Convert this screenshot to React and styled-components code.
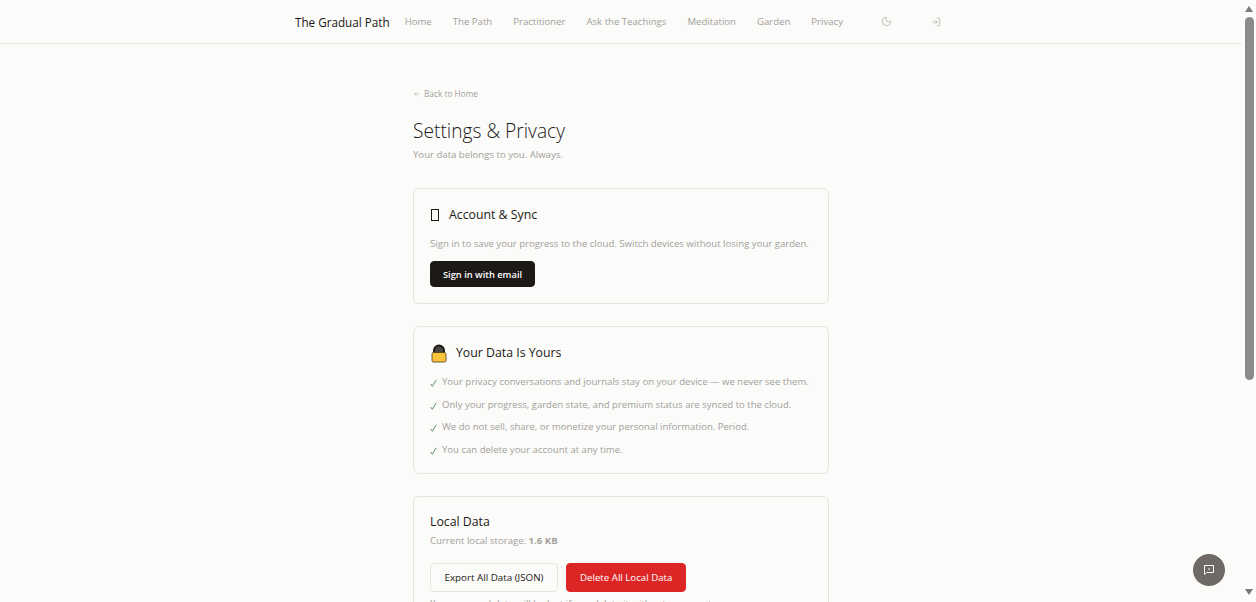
import React from 'react'
import styled, { createGlobalStyle } from 'styled-components'
import { Moon, LogIn, ArrowLeft } from 'lucide-react'

const GlobalStyle = createGlobalStyle`
html, body {
    margin: 0;
    padding: 0;
    height: 100%;
    overflow: hidden;
    background: #fbfbf9;
}
* {
    box-sizing: border-box;
}
`

const Shell = styled.div`
height: 100vh;
display: flex;
background: #fbfbf9;
color: #1c1917;
font-family: "Open Sans", "Noto Sans", sans-serif;
`

const Content = styled.div`
flex: 1;
min-width: 0;
overflow: hidden;
`

const ScrollRail = styled.div`
width: 14px;
flex: none;
display: flex;
flex-direction: column;
align-items: center;
padding: 6px 0 7px 0;
background: #fcfcfb;
`

const ScrollThumb = styled.div`
width: 9px;
height: 363px;
margin-top: 5px;
border-radius: 5px;
background: #8b8b8b;
`

const ScrollSpacer = styled.div`
flex: 1;
`

const Arrow = styled.div`
width: 0;
height: 0;
border-left: 4.5px solid transparent;
border-right: 4.5px solid transparent;
${(p) => p.$down ? 'border-top: 6px solid #7a7a7a;' : 'border-bottom: 6px solid #7a7a7a;'}
`

const Header = styled.header`
height: 44px;
border-bottom: 1px solid #e8e6e3;
display: flex;
justify-content: center;
`

const NavInner = styled.nav`
width: 652px;
display: flex;
align-items: center;
justify-content: space-between;
padding-right: 6px;
`

const Brand = styled.a`
font-size: 11.7px;
color: #1c1917;
margin-right: 15px;
white-space: nowrap;
`

const NavLinks = styled.div`
display: flex;
align-items: center;
gap: 21px;
flex: 1;
`

const NavLink = styled.a`
font-size: 9.6px;
color: #a3a09c;
white-space: nowrap;
`

const NavIcons = styled.div`
display: flex;
align-items: center;
gap: 39px;
color: #a3a09c;
`

const Main = styled.main`
width: 416px;
margin: 0 auto;
padding: 44px 0 48px;
`

const BackLink = styled.a`
display: flex;
align-items: center;
gap: 3px;
font-size: 8.3px;
line-height: 12px;
color: #a3a09c;
`

const Title = styled.h1`
margin: 16px 0 0;
font-size: 19.2px;
line-height: 30px;
font-weight: 300;
color: #1c1917;
`

const Subtitle = styled.p`
margin: 2px 0 26px;
font-size: 9.6px;
line-height: 14px;
color: #a3a09c;
`

const Card = styled.section`
border: 1px solid #e7e5e2;
border-radius: 6px;
padding: ${(p) => p.$padding || '16px'};
margin-bottom: 22px;
`

const CardHeading = styled.h2`
margin: 0;
display: flex;
align-items: center;
gap: ${(p) => p.$gap || '10px'};
font-size: 12.3px;
line-height: 20px;
font-weight: 400;
color: #1c1917;
`

const MissingGlyph = styled.span`
width: 8px;
height: 12px;
border: 1px solid #1c1917;
margin-left: 1px;
`

const Muted = styled.p`
margin: ${(p) => p.$margin || '0'};
font-size: 9.6px;
line-height: 14px;
color: #a3a09c;

strong {
    font-weight: 700;
}
`

const Button = styled.button`
display: block;
height: ${(p) => p.$height || '29px'};
padding: 0 ${(p) => p.$pad || '13px'};
border-radius: 4px;
border: 1px solid ${(p) => p.$border};
background: ${(p) => p.$bg};
color: ${(p) => p.$fg};
font-family: inherit;
font-size: ${(p) => p.$size || '9.8px'};
font-weight: ${(p) => p.$weight || 400};
`

const Checks = styled.ul`
list-style: none;
margin: 12px 0 0;
padding: 0;
display: flex;
flex-direction: column;
gap: 8.7px;
`

const CheckRow = styled.li`
display: flex;
align-items: center;
gap: 5px;
font-size: 9.55px;
line-height: 14px;
color: #a3a09c;
white-space: nowrap;
`

const CheckMark = styled.svg`
flex: none;
margin-top: 2px;
`

const ButtonRow = styled.div`
display: flex;
gap: 8px;
margin-top: 15px;
`

const Footnote = styled.p`
margin: 5px 0 0;
font-size: 9.6px;
line-height: 14px;
color: #a3a09c;
white-space: nowrap;
`

const ChatFab = styled.button`
position: fixed;
right: 31px;
bottom: 16px;
width: 32px;
height: 32px;
border-radius: 50%;
border: none;
padding: 0;
background: #6f6a65;
color: #fff;
display: flex;
align-items: center;
justify-content: center;
`

const LockIcon = () => (
    <svg width="16" height="19" viewBox="0 0 16 19" style={{ marginLeft: 1 }}>
        <path d="M3 9V6.5a5 5 0 0 1 10 0V9" fill="#4a4642" stroke="#1c1917" strokeWidth="2" />
        <rect x="1" y="8.5" width="14" height="9.5" rx="1.5" fill="#fbc23c" stroke="#4a3c1c" strokeWidth="0.8" />
    </svg>
)

const ChatIcon = () => (
    <svg width="12" height="12" viewBox="0 0 12 12" fill="none" stroke="currentColor" strokeWidth="1" strokeLinejoin="round">
        <path d="M1.5 1.5h9v7h-7l-2 2z" />
        <rect x="5.4" y="4.2" width="1.2" height="1.6" fill="currentColor" stroke="none" />
    </svg>
)

const links = ['Home', 'The Path', 'Practitioner', 'Ask the Teachings', 'Meditation', 'Garden', 'Privacy']

const promises = [
    'Your privacy conversations and journals stay on your device — we never see them.',
    'Only your progress, garden state, and premium status are synced to the cloud.',
    'We do not sell, share, or monetize your personal information. Period.',
    'You can delete your account at any time.',
]

const App = () => {
    return (
        <Shell>
            <GlobalStyle />
            <Content>
                <Header>
                    <NavInner>
                        <Brand>The Gradual Path</Brand>
                        <NavLinks>
                            {links.map((l) => <NavLink key={l}>{l}</NavLink>)}
                        </NavLinks>
                        <NavIcons>
                            <Moon size={11} strokeWidth={1.5} />
                            <LogIn size={10} strokeWidth={1.5} />
                        </NavIcons>
                    </NavInner>
                </Header>
                <Main>
                    <BackLink><ArrowLeft size={8} strokeWidth={1.5} /> Back to Home</BackLink>
                    <Title>Settings &amp; Privacy</Title>
                    <Subtitle>Your data belongs to you. Always.</Subtitle>

                    <Card>
                        <CardHeading><MissingGlyph /> Account &amp; Sync</CardHeading>
                        <Muted $margin="12px 0 10px">Sign in to save your progress to the cloud. Switch devices without losing your garden.</Muted>
                        <Button $height="26px" $pad="12px" $size="9.3px" $bg="#1c1917" $fg="#fff" $border="#1c1917" $weight={600}>Sign in with email</Button>
                    </Card>

                    <Card>
                        <CardHeading $gap="9px"><LockIcon /> Your Data Is Yours</CardHeading>
                        <Checks>
                            {promises.map((t) => (
                                <CheckRow key={t}>
                                    <CheckMark width="7" height="8" viewBox="0 0 7 8" fill="none" stroke="#5f9375" strokeWidth="1">
                                        <path d="M.7 5l1.6 2.3L6.2.8" />
                                    </CheckMark>
                                    {t}
                                </CheckRow>
                            ))}
                        </Checks>
                    </Card>

                    <Card $padding="15px 16px 16px">
                        <CardHeading>Local Data</CardHeading>
                        <Muted $margin="2px 0 0">Current local storage: <strong>1.6 KB</strong></Muted>
                        <ButtonRow>
                            <Button $pad="13.5px" $bg="transparent" $fg="#1c1917" $border="#e7e5e2">Export All Data (JSON)</Button>
                            <Button $size="9.7px" $bg="#dc2626" $fg="#fff" $border="#dc2626" $weight={500}>Delete All Local Data</Button>
                        </ButtonRow>
                        <Footnote>Your unsaved data will be lost if you delete it without an export.</Footnote>
                    </Card>
                </Main>
            </Content>
            <ScrollRail>
                <Arrow />
                <ScrollThumb />
                <ScrollSpacer />
                <Arrow $down />
            </ScrollRail>
            <ChatFab><ChatIcon /></ChatFab>
        </Shell>
    )
}

export default App
